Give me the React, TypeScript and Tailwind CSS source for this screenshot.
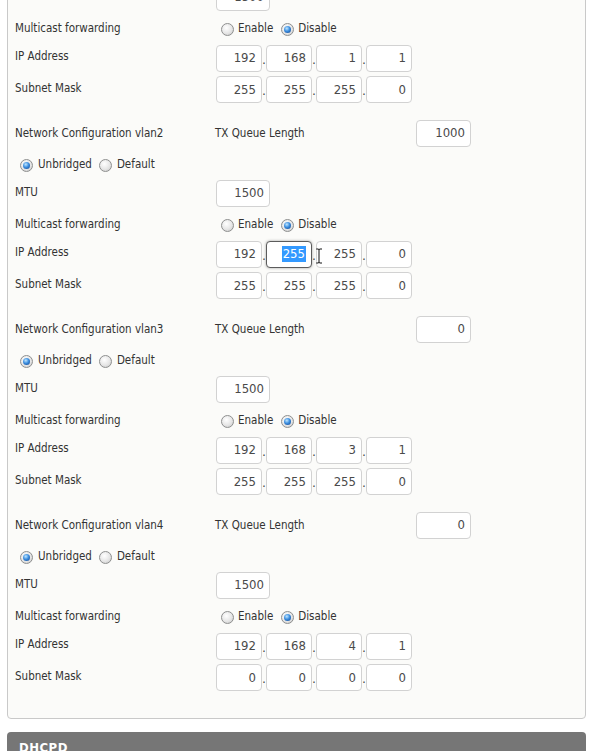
import React from "react";

const FONT = '"DejaVu Sans Condensed", "DejaVu Sans", Tahoma, sans-serif';

function Radio({ checked }: { checked?: boolean }) {
  return (
    <span className="inline-flex h-[13px] w-[13px] shrink-0 items-center justify-center rounded-full border border-[#8e8f8f] bg-[radial-gradient(circle_at_40%_35%,#ffffff,#e6e6e6_55%,#c4c4c4)]">
      {checked && (
        <span className="h-[7px] w-[7px] rounded-full bg-[radial-gradient(circle_at_40%_35%,#bfe6ff,#3d8fe0_45%,#0c3d86)]" />
      )}
    </span>
  );
}

function Box({ v, className, focus }: { v: string; className: string; focus?: boolean }) {
  return (
    <div
      className={
        "flex h-[27px] items-center justify-end rounded-[4px] bg-white pr-[5px] text-[13px] " +
        (focus
          ? "border border-[#5c5c5c] text-[#444] shadow-[0_0_3px_rgba(0,0,0,0.35)] "
          : "border border-[#d2d2d2] text-[#4a4a4a] ") +
        className
      }
    >
      {focus ? <span className="bg-[#3399ff] px-[1px] leading-[16px] text-white">{v}</span> : v}
    </div>
  );
}

function Dot() {
  return <span className="flex h-[27px] w-[4px] items-end justify-center pb-[6px] text-[12px] leading-none text-[#333]">.</span>;
}

function Quad({ vals, focusIdx, cursor }: { vals: string[]; focusIdx?: number; cursor?: boolean }) {
  return (
    <div className="relative flex items-center">
      {vals.map((v, i) => (
        <React.Fragment key={i}>
          <Box v={v} className="w-[46px]" focus={focusIdx === i} />
          {i < 3 && <Dot />}
        </React.Fragment>
      ))}
      {cursor && (
        <svg className="absolute left-[99px] top-[7px]" width="8" height="16" viewBox="0 0 8 16">
          <path d="M1 1 H3 Q4 1 4 2 V14 Q4 15 3 15 H1 M7 1 H5 Q4 1 4 2 M4 14 Q4 15 5 15 H7" fill="none" stroke="#fff" strokeWidth="2.5" />
          <path d="M1 1 H3 Q4 1 4 2 V14 Q4 15 3 15 H1 M7 1 H5 Q4 1 4 2 M4 14 Q4 15 5 15 H7" fill="none" stroke="#111" strokeWidth="1" />
        </svg>
      )}
    </div>
  );
}

type BlockProps = {
  name: string;
  tx: string;
  ip: string[];
  mask: string[];
  last?: boolean;
  focus?: boolean;
};

function Block({ name, tx, ip, mask, last, focus }: BlockProps) {
  return (
    <div className={last ? "" : "pb-[13px]"}>
      <div className="flex h-[30px] items-center">
        <div className="w-[200px] pt-[1px]">Network Configuration {name}</div>
        <div className="w-[201px] pt-[1px]">TX Queue Length</div>
        <Box v={tx} className="w-[55px]" />
      </div>
      <div className="flex h-[30px] items-center pl-[5px] pt-[4px]">
        <Radio checked />
        <span className="ml-[5px]">Unbridged</span>
        <span className="ml-[7px] flex items-center">
          <Radio />
          <span className="ml-[5px]">Default</span>
        </span>
      </div>
      <div className="flex h-[30px] items-center">
        <div className="-mt-[1px] w-[201px]">MTU</div>
        <Box v="1500" className="w-[54px]" />
      </div>
      <div className="flex h-[30px] items-center pt-[4px]">
        <div className="w-[201px]">Multicast forwarding</div>
        <div className="flex items-center pl-[5px]">
          <Radio />
          <span className="ml-[4px]">Enable</span>
          <span className="ml-[8px] flex items-center">
            <Radio checked />
            <span className="ml-[4px]">Disable</span>
          </span>
        </div>
      </div>
      <div className="flex h-[32px] items-center">
        <div className="-mt-[2px] w-[201px]">IP Address</div>
        <Quad vals={ip} focusIdx={focus ? 1 : undefined} cursor={focus} />
      </div>
      <div className="flex h-[31px] items-center">
        <div className="-mt-[2px] w-[201px]">Subnet Mask</div>
        <Quad vals={mask} />
      </div>
    </div>
  );
}

export default function App() {
  return (
    <div className="h-[751px] overflow-hidden bg-white text-[11.5px] text-[#333]" style={{ fontFamily: FONT }}>
      <div className="-mt-[79px] ml-[7px] w-[579px] rounded-[4px] border border-[#c9c9c9] bg-[#fbfbf9] px-[7px] pb-[25px]">
        <Block name="vlan1" tx="1000" ip={["192", "168", "1", "1"]} mask={["255", "255", "255", "0"]} />
        <Block name="vlan2" tx="1000" ip={["192", "255", "255", "0"]} mask={["255", "255", "255", "0"]} focus />
        <Block name="vlan3" tx="0" ip={["192", "168", "3", "1"]} mask={["255", "255", "255", "0"]} />
        <Block name="vlan4" tx="0" ip={["192", "168", "4", "1"]} mask={["0", "0", "0", "0"]} last />
      </div>
      <div className="ml-[7px] mt-[13px] h-[40px] w-[579px] rounded-t-[4px] bg-[#767676] px-[12px] pt-[6px] text-[13px] font-bold tracking-[0.5px] text-white">
        DHCPD
      </div>
    </div>
  );
}
